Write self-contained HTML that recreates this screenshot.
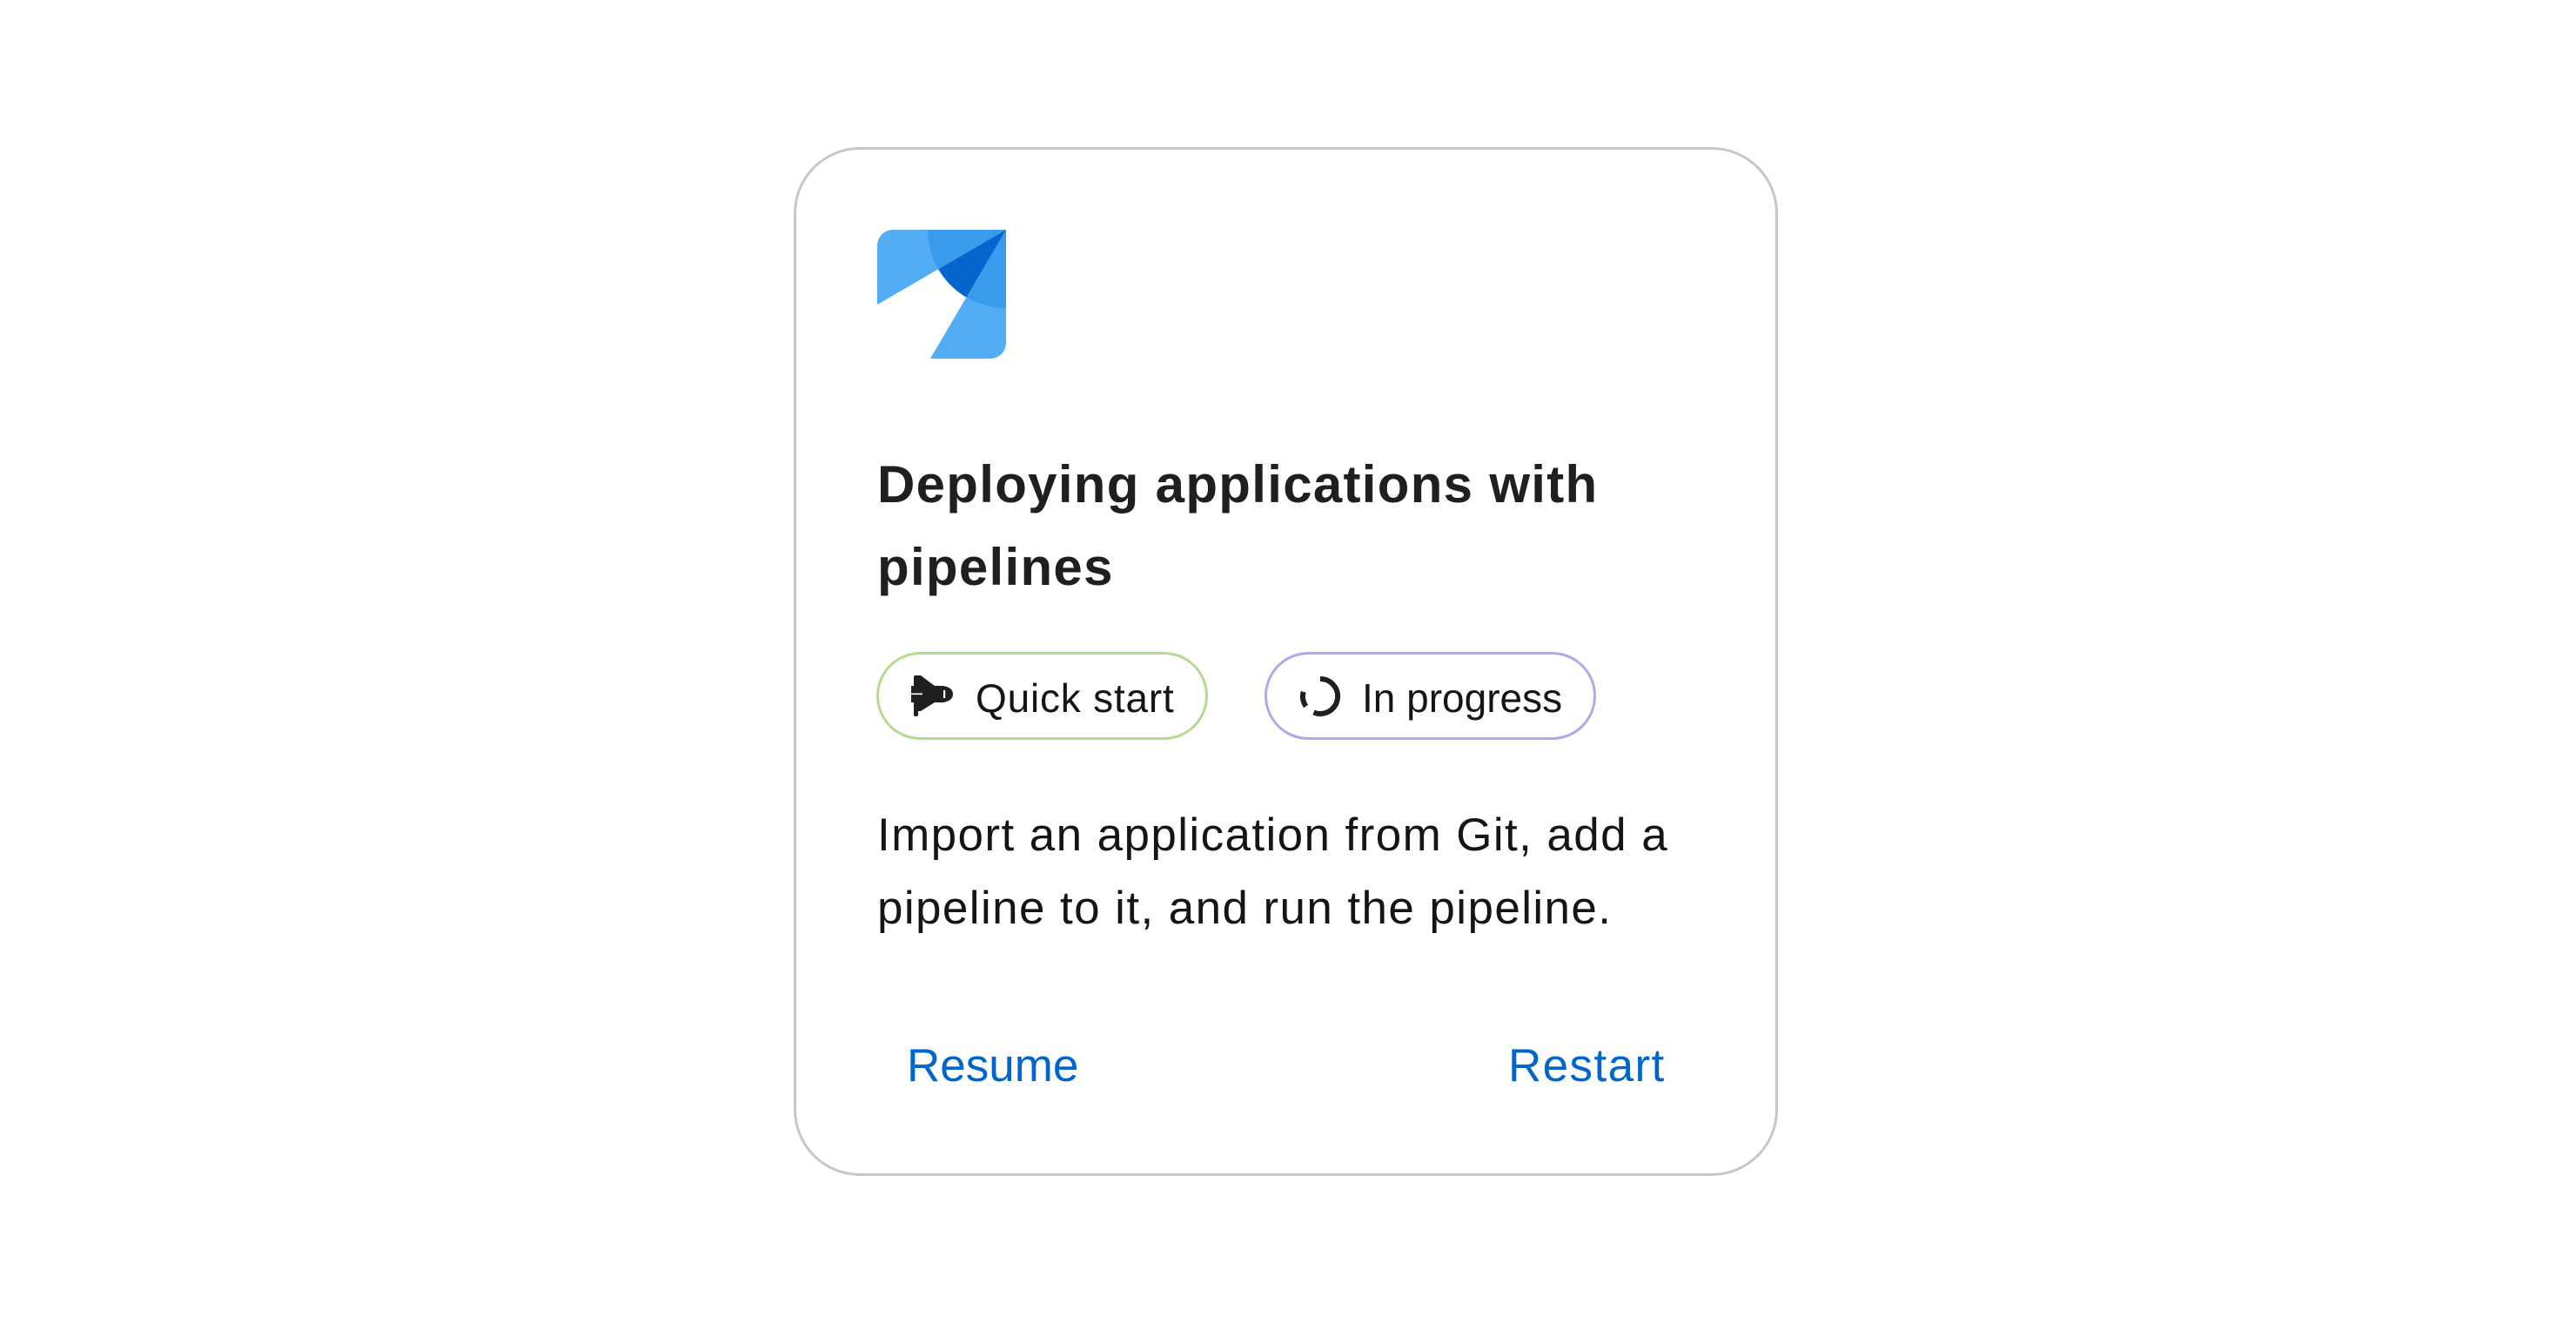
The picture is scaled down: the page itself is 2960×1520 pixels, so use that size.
<!DOCTYPE html>
<html><head><meta charset="utf-8"><style>
html,body{margin:0;padding:0;background:#fff;width:2960px;height:1520px;overflow:hidden;font-family:"Liberation Sans",sans-serif;color:#151515}
.card{position:absolute;left:912px;top:169px;width:1125px;height:1176px;border:3px solid #c7c7c7;border-radius:76px;box-sizing:content-box}
.abs{position:absolute;white-space:nowrap}
.title{font-weight:bold;font-size:60px;letter-spacing:1.3px;color:#1f1f1f}
.badge{position:absolute;top:749px;height:95px;border-radius:52px;border:3px solid;box-sizing:content-box}
.btxt{position:absolute;font-size:46px;white-space:nowrap;color:#151515}
.desc{font-size:53px;letter-spacing:1.4px;color:#151515}
.link{font-size:53px;color:#0066cc}
</style></head><body>
<div class="card"></div>
<svg class="abs" style="left:1008px;top:264px" width="148" height="148" viewBox="0 0 148 148">
<defs>
<clipPath id="r"><path d="M18 0H148V130A18 18 0 0 1 130 148H0V18A18 18 0 0 1 18 0Z"/></clipPath>
<clipPath id="p"><path d="M0 0H148L0 86Z M148 0V148H61Z"/></clipPath>
<clipPath id="w"><path d="M148 0L0 86L0 148L61 148Z"/></clipPath>
</defs>
<g clip-path="url(#r)">
<path d="M0 0H148L0 86Z M148 0V148H61Z" fill="#52adf5"/>
<circle cx="148" cy="0" r="90" fill="#3a9bed" clip-path="url(#p)"/>
<circle cx="148" cy="0" r="90" fill="#0466cc" clip-path="url(#w)"/>
</g>
</svg>
<div class="abs title" style="left:1008px;top:522px">Deploying applications with</div>
<div class="abs title" style="left:1008px;top:617px">pipelines</div>
<div class="badge" style="left:1007px;width:375px;border-color:#b3dc8f"></div>
<div class="badge" style="left:1453px;width:375px;border-color:#b6a6e9"></div>
<svg class="abs" style="left:1040px;top:770px" width="80" height="70" viewBox="0 0 80 70">
<rect x="10" y="6" width="5" height="47" rx="2" fill="#1f1f1f"/>
<polygon points="14,6 18,6 34,18 34,37 18,47 14,47" fill="#1f1f1f"/>
<path d="M7 18 H44 Q55 20 55 27.5 Q55 35 44 37 H7 Z" fill="#1f1f1f"/>
<rect x="44" y="23" width="2.2" height="9" fill="#fff"/>
<rect x="6" y="26.5" width="14" height="1.6" fill="#fff"/>
</svg>
<svg class="abs" style="left:1485px;top:770px" width="80" height="70" viewBox="0 0 80 70">
<path d="M32 10 A20 20 0 1 1 24.5 48.5" fill="none" stroke="#1f1f1f" stroke-width="6"/>
<path d="M15.6 41.5 A20 20 0 0 1 12.7 24.8" fill="none" stroke="#1f1f1f" stroke-width="6"/>
</svg>
<div class="abs btxt" style="left:1121px;top:775px;letter-spacing:0.8px">Quick start</div>
<div class="abs btxt" style="left:1565px;top:775px">In progress</div>
<div class="abs desc" style="left:1008px;top:929px">Import an application from Git, add a</div>
<div class="abs desc" style="left:1008px;top:1013px">pipeline to it, and run the pipeline.</div>
<div class="abs link" style="left:1042px;top:1194px">Resume</div>
<div class="abs link" style="left:1733px;top:1194px;letter-spacing:1.4px">Restart</div>
</body></html>
